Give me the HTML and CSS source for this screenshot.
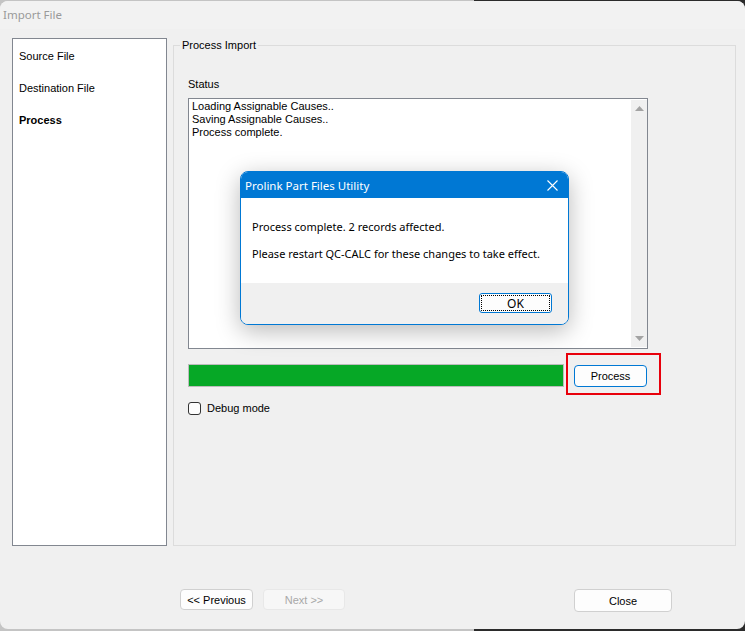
FILE: index.html
```html
<!DOCTYPE html>
<html>
<head>
  <meta charset="utf-8">
  <title>Import File</title>
  <link rel="stylesheet" href="styles.css">
</head>
<body>
  <div class="window">
    <div class="titlebar">Import File</div>

    <div class="content">
      <div class="main">
        <ul class="steps">
          <li>Source File</li>
          <li>Destination File</li>
          <li class="current">Process</li>
        </ul>

        <div class="group">
          <span class="legend">Process Import</span>

          <div class="field-label">Status</div>
          <div class="status-box">
            <div class="status-text">
              Loading Assignable Causes..<br>
              Saving Assignable Causes..<br>
              Process complete.
            </div>
            <div class="scrollbar">
              <svg width="9" height="5" viewBox="0 0 9 5"><polygon points="0,5 4.5,0 9,5" fill="#a3a3a3"/></svg>
              <svg width="9" height="5" viewBox="0 0 9 5"><polygon points="0,0 9,0 4.5,5" fill="#a3a3a3"/></svg>
            </div>
          </div>

          <div class="progress-row">
            <div class="progress"><div class="progress-fill" style="width: 100%;"></div></div>
            <button type="button" class="button focus">Process<span class="highlight"></span></button>
          </div>

          <label class="checkbox"><span class="box"></span>Debug mode</label>
        </div>
      </div>

      <div class="footer">
        <button type="button" class="button nav">&lt;&lt; Previous</button>
        <button type="button" class="button nav next" disabled>Next &gt;&gt;</button>
        <button type="button" class="button close">Close</button>
      </div>
    </div>

    <div class="dialog">
      <div class="dialog-title">
        <span>Prolink Part Files Utility</span>
        <svg width="11" height="11" viewBox="0 0 11 11"><path d="M0.5 0.5 L10.5 10.5 M10.5 0.5 L0.5 10.5" stroke="#fff" stroke-width="1.1"/></svg>
      </div>
      <div class="dialog-body">
        <p>Process complete. 2 records affected.</p>
        <p>Please restart QC-CALC for these changes to take effect.</p>
      </div>
      <div class="dialog-footer">
        <button type="button" class="button ok">OK</button>
      </div>
    </div>
  </div>
</body>
</html>
```

FILE: styles.css
```css
body {
  margin: 0;
  width: 745px;
  height: 631px;
  overflow: hidden;
  background: linear-gradient(to right, #c4c4c4 474px, #2b2b2b 474px);
  font-family: 'Liberation Sans', Arial, sans-serif;
  font-size: 11px;
  color: #000;
}

.window {
  position: relative;
  margin-top: 1px;
  height: 628px;
  background: #f0f0f0;
  border-radius: 8px;
  overflow: hidden;
}

.titlebar {
  height: 28px;
  line-height: 27px;
  padding-left: 3px;
  background: #f2f2f2;
  color: #9a9a9a;
  font-family: 'Noto Sans', sans-serif;
  font-size: 11.5px;
}

.content {
  padding-top: 9px;
}

.main {
  display: flex;
  gap: 6px;
  height: 508px;
  padding-left: 12px;
}

.steps {
  list-style: none;
  margin: 0;
  padding: 1px 0 0 6px;
  width: 155px;
  box-sizing: border-box;
  background: white;
  border: 1px solid #828790;
}

.steps li {
  line-height: 32px;
}

.steps li.current {
  font-weight: bold;
}

.group {
  position: relative;
  margin-top: 7px;
  width: 563px;
  box-sizing: border-box;
  border: 1px solid #dcdcdc;
  padding: 32px 0 0 14px;
}

.legend {
  position: absolute;
  top: -7px;
  left: 6px;
  padding: 0 2px;
  background: #f0f0f0;
  line-height: 13px;
}

.field-label {
  line-height: 13px;
  margin-bottom: 7px;
}

.status-box {
  display: flex;
  width: 460px;
  height: 251px;
  box-sizing: border-box;
  border: 1px solid #828790;
  background: white;
}

.status-text {
  flex: 1;
  padding: 1px 3px;
  line-height: 13px;
}

.scrollbar {
  width: 16px;
  margin: 1px 0;
  background: #f0f0f0;
  display: flex;
  flex-direction: column;
  align-items: center;
  justify-content: space-between;
  padding: 6px 0;
  box-sizing: border-box;
}

.progress-row {
  display: flex;
  align-items: flex-start;
  margin-top: 15px;
}

.progress {
  width: 376px;
  height: 23px;
  box-sizing: border-box;
  border: 1px solid #bcbcbc;
  background: #e6e6e6;
}

.progress-fill {
  height: 100%;
  background: #06a826;
}

.button {
  background: #fdfdfd;
  border: 1px solid #d0d0d0;
  border-radius: 4px;
  padding: 0;
  font-family: inherit;
  font-size: 11px;
  color: #000;
  box-sizing: border-box;
}

.button.focus {
  position: relative;
  width: 73px;
  height: 22px;
  margin: 1px 0 0 10px;
  border-color: #0078d4;
}

.highlight {
  position: absolute;
  left: -9px;
  top: -13px;
  width: 95px;
  height: 42px;
  box-sizing: border-box;
  border: 2px solid #e8000b;
}

.checkbox {
  display: flex;
  align-items: center;
  gap: 6px;
  margin-top: 15px;
  line-height: 13px;
}

.checkbox .box {
  width: 13px;
  height: 13px;
  box-sizing: border-box;
  border: 1px solid #333;
  border-radius: 3px;
  background: #fdfdfd;
}

.footer {
  display: flex;
  gap: 10px;
  padding: 43px 73px 0 180px;
}

.button.nav {
  width: 73px;
  height: 21px;
}

.button.next {
  width: 82px;
  background: #f7f7f7;
  border-color: #e8e8e8;
  color: #a8a8a8;
}

.button.close {
  margin-left: auto;
  width: 98px;
  height: 23px;
}

.dialog {
  position: absolute;
  left: 240px;
  top: 170px;
  width: 329px;
  height: 154px;
  box-sizing: border-box;
  border: 1px solid #0078d4;
  border-radius: 8px;
  overflow: hidden;
  background: white;
  box-shadow: 0 6px 24px rgba(0,0,0,0.28);
  font-family: 'Noto Sans', sans-serif;
  font-size: 11px;
}

.dialog-title {
  display: flex;
  justify-content: space-between;
  align-items: center;
  height: 26px;
  padding: 0 10px 0 4px;
  background: #0078d4;
  color: white;
  font-size: 11.5px;
}

.dialog-body {
  height: 85px;
  box-sizing: border-box;
  padding: 21px 11px 0;
  white-space: nowrap;
}

.dialog-body p {
  margin: 0 0 11px 0;
  line-height: 16px;
}

.dialog-footer {
  display: flex;
  justify-content: flex-end;
  height: 41px;
  box-sizing: border-box;
  padding: 10px 16px 0 0;
  background: #f0f0f0;
}

.button.ok {
  width: 73px;
  height: 20px;
  font-family: 'Noto Sans', sans-serif;
  font-size: 12px;
  border-color: #0078d4;
  border-radius: 3px;
  outline: 1px dotted #000;
  outline-offset: -3px;
}
```
